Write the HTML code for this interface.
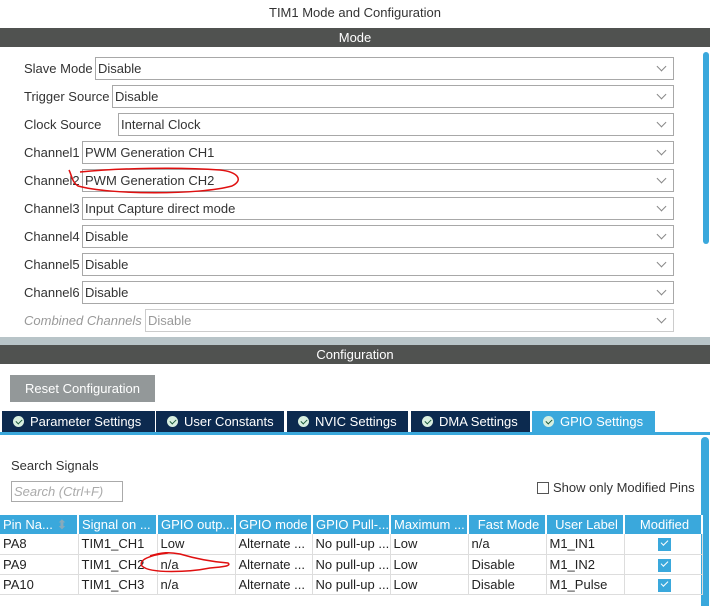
<!DOCTYPE html>
<html><head><style>
*{margin:0;padding:0;box-sizing:border-box}
body{width:710px;height:606px;overflow:hidden;background:#fff;font-family:"Liberation Sans",sans-serif;font-size:13px;color:#222;position:relative}
.a{position:absolute}
.bar{background:#505250;color:#fff;text-align:center;font-size:13px;line-height:19px;left:0;width:710px;height:19px}
.lbl{left:24px;line-height:23px;color:#333}
.sel{border:1px solid #a8a8a8;height:23px;line-height:21px;padding-left:2px;color:#333;right:36px}
.sel:after{content:"";position:absolute;right:8px;top:5px;width:6px;height:6px;border-right:1px solid #888;border-bottom:1px solid #888;transform:rotate(45deg)}
.tab{top:411px;height:22px;background:#0c2a4f;color:#fff;line-height:21px;padding-left:28px;font-size:13px}
.tab:before{content:"";position:absolute;left:11px;top:5px;width:11px;height:11px;border-radius:50%;background:#d8efe0}
.tab:after{content:"";position:absolute;left:14px;top:8px;width:5px;height:3px;border-left:1.5px solid #1a5a3a;border-bottom:1.5px solid #1a5a3a;transform:rotate(-45deg)}
table{border-collapse:collapse;position:absolute;left:0;top:515px;width:702px;table-layout:fixed}
th{background:#3aa8dc;color:#fff;font-weight:normal;height:19px;text-align:left;padding-left:3px;border-right:2px solid #fff;white-space:nowrap;overflow:hidden}
td{height:20px;padding-left:3px;border-right:1px solid #ddd;border-bottom:1px solid #ddd;white-space:nowrap;overflow:hidden;color:#222}
.cb{display:inline-block;width:13px;height:13px;background:#3aa8dc;position:relative;vertical-align:middle}
.cb:after{content:"";position:absolute;left:3px;top:2px;width:6px;height:3px;border-left:1.5px solid #fff;border-bottom:1.5px solid #fff;transform:rotate(-45deg)}
</style></head><body>
<div class="a" style="top:5px;left:0;width:710px;text-align:center;color:#333;font-size:13px">TIM1 Mode and Configuration</div>
<div class="a bar" style="top:28px">Mode</div>
<div class="a" style="left:703px;top:52px;width:6px;height:192px;background:#3aa8dc;border-radius:3px"></div>

<div class="a lbl" style="top:57px">Slave Mode</div><div class="a sel" style="top:57px;left:95px;width:579px">Disable</div>
<div class="a lbl" style="top:85px">Trigger Source</div><div class="a sel" style="top:85px;left:112px;width:562px">Disable</div>
<div class="a lbl" style="top:113px">Clock Source</div><div class="a sel" style="top:113px;left:118px;width:556px">Internal Clock</div>
<div class="a lbl" style="top:141px">Channel1</div><div class="a sel" style="top:141px;left:82px;width:592px">PWM Generation CH1</div>
<div class="a lbl" style="top:169px">Channel2</div><div class="a sel" style="top:169px;left:82px;width:592px">PWM Generation CH2</div>
<div class="a lbl" style="top:197px">Channel3</div><div class="a sel" style="top:197px;left:82px;width:592px">Input Capture direct mode</div>
<div class="a lbl" style="top:225px">Channel4</div><div class="a sel" style="top:225px;left:82px;width:592px">Disable</div>
<div class="a lbl" style="top:253px">Channel5</div><div class="a sel" style="top:253px;left:82px;width:592px">Disable</div>
<div class="a lbl" style="top:281px">Channel6</div><div class="a sel" style="top:281px;left:82px;width:592px">Disable</div>
<div class="a lbl" style="top:309px;color:#999;font-style:italic">Combined Channels</div><div class="a sel" style="top:309px;left:145px;width:529px;color:#999;border-color:#ccc">Disable</div>

<div class="a" style="top:337px;left:0;width:710px;height:8px;background:#b8c4c8"></div>
<div class="a bar" style="top:345px">Configuration</div>
<div class="a" style="left:10px;top:375px;width:145px;height:27px;background:#939899;color:#fff;line-height:27px;text-align:center">Reset Configuration</div>

<div class="a tab" style="left:2px;width:153px">Parameter Settings</div>
<div class="a tab" style="left:156px;width:128px">User Constants</div>
<div class="a tab" style="left:287px;width:121px">NVIC Settings</div>
<div class="a tab" style="left:411px;width:119px">DMA Settings</div>
<div class="a tab" style="left:532px;width:123px;background:#3aa8dc">GPIO Settings</div>
<div class="a" style="left:0;top:432px;width:710px;height:3px;background:#3aa8dc"></div>
<div class="a" style="left:701px;top:437px;width:8px;height:169px;background:#3aa8dc;border-radius:4px 4px 0 0"></div>

<div class="a" style="left:11px;top:458px;color:#333">Search Signals</div>
<div class="a" style="left:11px;top:481px;width:112px;height:21px;border:1px solid #aaa;color:#aaa;font-style:italic;line-height:19px;padding-left:2px">Search (Ctrl+F)</div>
<div class="a" style="left:537px;top:482px;width:12px;height:12px;border:1px solid #555"></div>
<div class="a" style="left:553px;top:480px;color:#333">Show only Modified Pins</div>

<table>
<colgroup><col style="width:78px"><col style="width:79px"><col style="width:78px"><col style="width:77px"><col style="width:78px"><col style="width:78px"><col style="width:78px"><col style="width:78px"><col style="width:78px"></colgroup>
<tr><th>Pin Na... <span style="color:#8ab">⬍</span></th><th>Signal on ...</th><th>GPIO outp...</th><th>GPIO mode</th><th>GPIO Pull-...</th><th>Maximum ...</th><th style="text-align:center">Fast Mode</th><th style="text-align:center">User Label</th><th style="text-align:center">Modified</th></tr>
<tr><td>PA8</td><td>TIM1_CH1</td><td>Low</td><td>Alternate ...</td><td>No pull-up ...</td><td>Low</td><td>n/a</td><td>M1_IN1</td><td style="text-align:center"><span class="cb"></span></td></tr>
<tr><td>PA9</td><td>TIM1_CH2</td><td>n/a</td><td>Alternate ...</td><td>No pull-up ...</td><td>Low</td><td>Disable</td><td>M1_IN2</td><td style="text-align:center"><span class="cb"></span></td></tr>
<tr><td>PA10</td><td>TIM1_CH3</td><td>n/a</td><td>Alternate ...</td><td>No pull-up ...</td><td>Low</td><td>Disable</td><td>M1_Pulse</td><td style="text-align:center"><span class="cb"></span></td></tr>
</table>

<svg class="a" style="left:0;top:0" width="710" height="606">
<path d="M69 170 C72 176,72 182,78 186 C110 195,200 195,232 186 C244 180,238 172,220 170 C180 167,120 168,80 172" fill="none" stroke="#e01010" stroke-width="1.5"/>
<path d="M168 553 C150 555,138 560,142 566 C150 574,190 572,210 568 C222 567,232 566,228 563 C215 562,200 560,180 554 C170 552,162 552,150 556" fill="none" stroke="#e01010" stroke-width="1.5"/>
</svg>
</body></html>
